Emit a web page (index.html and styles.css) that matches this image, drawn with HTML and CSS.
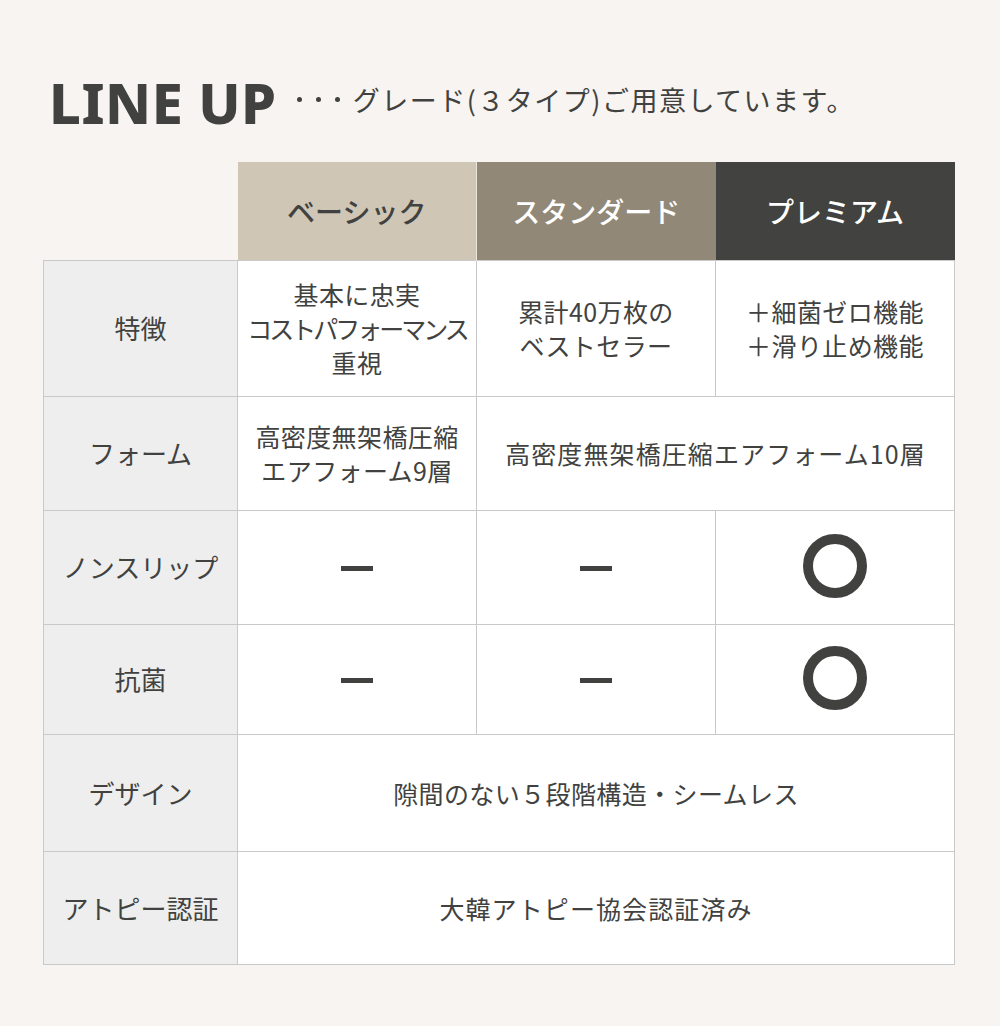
FILE: index.html
```html
<!DOCTYPE html>
<html lang="ja">
<head>
<meta charset="utf-8">
<link rel="stylesheet" href="styles.css">
</head>
<body>
<div class="page">
  <div class="title">
    <h1 class="title-main">LINE UP</h1>
    <span class="dots"><i></i><i></i><i></i></span>
    <span class="title-sub">グレード(３タイプ)ご用意しています。</span>
  </div>
  <table class="lineup">
    <colgroup>
      <col class="c-label"><col class="c-grade"><col class="c-grade"><col class="c-grade">
    </colgroup>
    <thead>
      <tr class="r-head">
        <th class="blank"></th>
        <th class="g-basic">ベーシック</th>
        <th class="g-standard">スタンダード</th>
        <th class="g-premium">プレミアム</th>
      </tr>
    </thead>
    <tbody>
      <tr class="r1">
        <th>特徴</th>
        <td>基本に忠実<br><span class="tight">コストパフォーマンス</span><br>重視</td>
        <td>累計40万枚の<br>ベストセラー</td>
        <td>＋細菌ゼロ機能<br>＋滑り止め機能</td>
      </tr>
      <tr class="r2">
        <th>フォーム</th>
        <td>高密度無架橋圧縮<br>エアフォーム9層</td>
        <td colspan="2" class="wide">高密度無架橋圧縮エアフォーム10層</td>
      </tr>
      <tr class="r3">
        <th>ノンスリップ</th>
        <td><span class="dash"></span></td>
        <td><span class="dash"></span></td>
        <td><span class="ring"></span></td>
      </tr>
      <tr class="r4">
        <th>抗菌</th>
        <td><span class="dash"></span></td>
        <td><span class="dash"></span></td>
        <td><span class="ring"></span></td>
      </tr>
      <tr class="r5">
        <th>デザイン</th>
        <td colspan="3">隙間のない５段階構造・シームレス</td>
      </tr>
      <tr class="r6">
        <th>アトピー認証</th>
        <td colspan="3" class="wide">大韓アトピー協会認証済み</td>
      </tr>
    </tbody>
  </table>
</div>
</body>
</html>
```

FILE: styles.css
```css
html, body {
  margin: 0;
  padding: 0;
  background: #f8f4f1;
}
.page {
  width: 1000px;
  height: 1026px;
  box-sizing: border-box;
  padding: 70px 0 0 43px;
  font-family: "Noto Sans CJK JP", "Noto Sans", sans-serif;
  color: #414240;
}
.title {
  display: flex;
  align-items: center;
  margin-left: 6px;
  height: 92px;
  box-sizing: border-box;
  padding-bottom: 30px;
}
.title-main {
  margin: 0;
  font-family: "Noto Sans", "Liberation Sans", sans-serif;
  font-weight: 800;
  font-size: 56px;
  letter-spacing: 0.5px;
  color: #414240;
  line-height: 62px;
  margin-top: 2px;
}
.dots {
  display: flex;
  gap: 14px;
  margin-left: 20px;
  margin-top: -4px;
}
.dots i {
  display: block;
  width: 5px;
  height: 5px;
  border-radius: 50%;
  background: #414240;
}
.title-sub {
  margin-left: 13px;
  font-size: 27px;
  font-weight: 400;
  color: #414240;
  letter-spacing: 1.5px;
  margin-top: -4px;
}
.lineup {
  border-collapse: collapse;
  table-layout: fixed;
  width: 911px;
}
.c-label { width: 194px; }
.c-grade { width: 239px; }
.lineup th, .lineup td {
  padding: 0;
  text-align: center;
  vertical-align: middle;
  font-weight: 400;
  font-size: 25px;
  line-height: 34px;
  letter-spacing: 0.4px;
  color: #414240;
}
.lineup tbody th, .lineup tbody td {
  border: 1px solid #c9c9c9;
}
.lineup tbody th {
  background: #eeeeee;
  font-size: 26px;
  letter-spacing: 0;
}
.lineup tbody td {
  background: #ffffff;
}
.lineup .wide { letter-spacing: 1.1px; }
.tight { letter-spacing: -3px; }
.r-head { height: 98px; }
.r-head th {
  font-size: 28px;
  font-weight: 500;
  letter-spacing: 0;
}
.r-head .blank { background: transparent; }
.g-basic { background: #cfc6b6; border-right: 1px solid #e9e4dc; }
.lineup .g-standard { background: #918877; color: #ffffff; }
.lineup .g-premium { background: #424340; color: #ffffff; }
.r1 { height: 136px; }
.r2 { height: 114px; }
.r3 { height: 114px; }
.r4 { height: 110px; }
.r5 { height: 117px; }
.r6 { height: 113px; }
.dash {
  display: inline-block;
  width: 32px;
  height: 5px;
  background: #414240;
  vertical-align: middle;
  margin-top: -6px;
}
.ring {
  display: inline-block;
  width: 64px;
  height: 64px;
  box-sizing: border-box;
  border: 10px solid #414240;
  border-radius: 50%;
  vertical-align: middle;
  margin-top: -2px;
}
```
